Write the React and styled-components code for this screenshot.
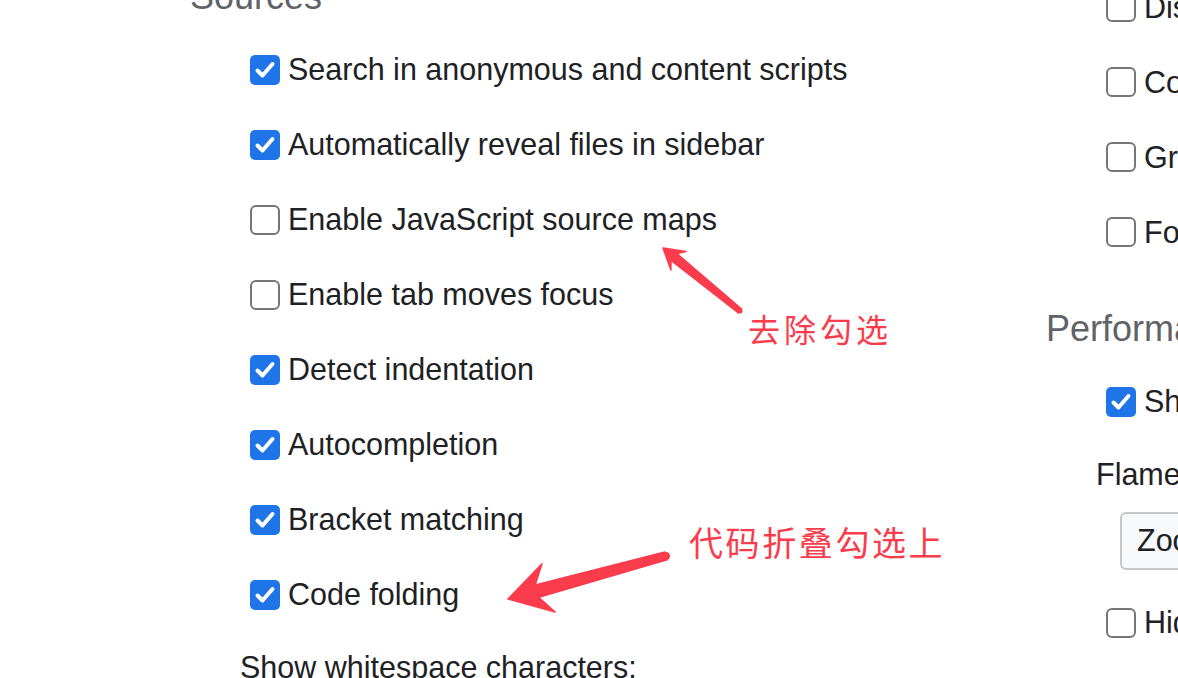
import React from 'react';
import styled, { createGlobalStyle } from 'styled-components';

const GlobalStyle = createGlobalStyle`
  html, body {
    margin: 0;
    padding: 0;
    background: #ffffff;
    overflow: hidden;
  }
  body {
    width: 1178px;
    height: 678px;
    font-family: "Liberation Sans", Arial, sans-serif;
    color: #202124;
  }
`;

const RED = '#fa3c4c';

const Canvas = styled.div`
  position: relative;
  width: 1178px;
  height: 678px;
  overflow: hidden;
`;

const Page = styled.div`
  display: grid;
  grid-template-columns: 1046px 1fr;
  margin-top: -30.5px;
`;

const Column = styled.div`
  display: flex;
  flex-direction: column;
  padding-left: ${p => p.$pad || 0}px;
  padding-top: ${p => p.$top || 0}px;
  white-space: nowrap;
`;

const Heading = styled.h2`
  margin: ${p => p.$mt || 0}px 0 15.3px 0;
  font-size: 36px;
  line-height: 40px;
  font-weight: 400;
  color: #5f6368;
`;

const Row = styled.label`
  display: flex;
  align-items: center;
  gap: 8px;
  height: 75px;
  padding-left: 60px;
  font-size: 30.5px;
  color: #202124;
`;

const Box = styled.span`
  flex: none;
  box-sizing: border-box;
  width: 30px;
  height: 30px;
  display: flex;
  align-items: center;
  justify-content: center;
  background: ${p => (p.$on ? '#1f74e8' : '#ffffff')};
  border: ${p => (p.$on ? 'none' : '2px solid #767676')};
  border-radius: ${p => (p.$on ? '5px' : '6px')};
`;

const FieldLabel = styled.div`
  padding-left: 50px;
  margin-top: ${p => p.$mt || 0}px;
  font-size: 30.5px;
  line-height: 40px;
  color: #202124;
`;

const Select = styled.div`
  margin: 18px 0 15.5px 74px;
  box-sizing: border-box;
  height: 58px;
  width: 200px;
  display: flex;
  align-items: center;
  padding-left: 15px;
  font-size: 30.5px;
  background: #f8f9fa;
  border: 2px solid #c8c8c8;
  border-radius: 6px;
`;

const Note = styled.div`
  position: absolute;
  left: ${p => p.$x}px;
  top: ${p => p.$y}px;
  font-family: "Noto Sans CJK SC", "Noto Sans", sans-serif;
  font-size: ${p => p.$size}px;
  letter-spacing: ${p => p.$ls}px;
  line-height: 1;
  color: ${RED};
  white-space: nowrap;
`;

const Overlay = styled.svg`
  position: absolute;
  left: 0;
  top: 0;
  pointer-events: none;
`;

const Check = ({ on }) => (
  <Box $on={on}>
    {on && (
      <svg width="30" height="30" viewBox="0 0 30 30">
        <path d="M7.5 15.5 L12.5 20.5 L22.5 9" fill="none" stroke="#fff" strokeWidth="4" strokeLinecap="round" strokeLinejoin="round" />
      </svg>
    )}
  </Box>
);

const Option = ({ on, children }) => (
  <Row>
    <Check on={on} />
    <span>{children}</span>
  </Row>
);

// tapered markup arrow, tail -> tip
const arrowPoints = (tail, tip, headLen, headHalf, neckLen, neckHalf, tailHalf) => {
  const dx = tip[0] - tail[0];
  const dy = tip[1] - tail[1];
  const len = Math.hypot(dx, dy);
  const ux = dx / len, uy = dy / len;
  const nx = -uy, ny = ux;
  const at = (d, w) => [tip[0] - ux * d + nx * w, tip[1] - uy * d + ny * w];
  const pts = [
    [tail[0] + nx * tailHalf, tail[1] + ny * tailHalf],
    at(neckLen, neckHalf),
    at(headLen, headHalf),
    tip,
    at(headLen, -headHalf),
    at(neckLen, -neckHalf),
    [tail[0] - nx * tailHalf, tail[1] - ny * tailHalf],
  ];
  return pts.map(p => p.map(v => v.toFixed(1)).join(',')).join(' ');
};

const Arrow = ({ tail, tip, headLen, headHalf, neckLen, neckHalf, tailHalf }) => (
  <g fill={RED} stroke={RED} strokeWidth="1.5" strokeLinejoin="round">
    <polygon points={arrowPoints(tail, tip, headLen, headHalf, neckLen, neckHalf, tailHalf)} />
    <circle cx={tail[0]} cy={tail[1]} r={tailHalf} stroke="none" />
  </g>
);

const sources = [
  ['Search in anonymous and content scripts', true],
  ['Automatically reveal files in sidebar', true],
  ['Enable JavaScript source maps', false],
  ['Enable tab moves focus', false],
  ['Detect indentation', true],
  ['Autocompletion', true],
  ['Bracket matching', true],
  ['Code folding', true],
];

const network = [
  'Disable cache (while DevTools is open)',
  'Color-code resource types',
  'Group network log by frame',
  'Force ad blocking on this site',
];

export default function App() {
  return (
    <Canvas>
      <GlobalStyle />
      <Page>
        <Column $pad={190} $top={7.7}>
          <Heading>Sources</Heading>
          {sources.map(([text, on]) => (
            <Option key={text} on={on}>{text}</Option>
          ))}
          <FieldLabel $mt={14.5}>Show whitespace characters:</FieldLabel>
        </Column>
        <Column>
          {network.map(text => (
            <Option key={text} on={false}>{text}</Option>
          ))}
          <Heading $mt={39.7}>Performance</Heading>
          <Option on>Show native functions in JS Profile</Option>
          <FieldLabel $mt={14.5}>Flamechart mouse wheel action:</FieldLabel>
          <Select>Zoom</Select>
          <Option on={false}>Hide chrome frame in Layers view</Option>
        </Column>
      </Page>

      <Overlay width="1178" height="678" viewBox="0 0 1178 678">
        <Arrow tail={[740, 311]} tip={[663, 248]} headLen={20} headHalf={12} neckLen={14} neckHalf={4.5} tailHalf={2.5} />
        <Arrow tail={[666, 556]} tip={[508, 599]} headLen={42} headHalf={25} neckLen={30} neckHalf={6.5} tailHalf={4} />
      </Overlay>
      <Note $x={748} $y={312} $size={32} $ls={4}>去除勾选</Note>
      <Note $x={689} $y={525} $size={34} $ls={2.6}>代码折叠勾选上</Note>
    </Canvas>
  );
}
